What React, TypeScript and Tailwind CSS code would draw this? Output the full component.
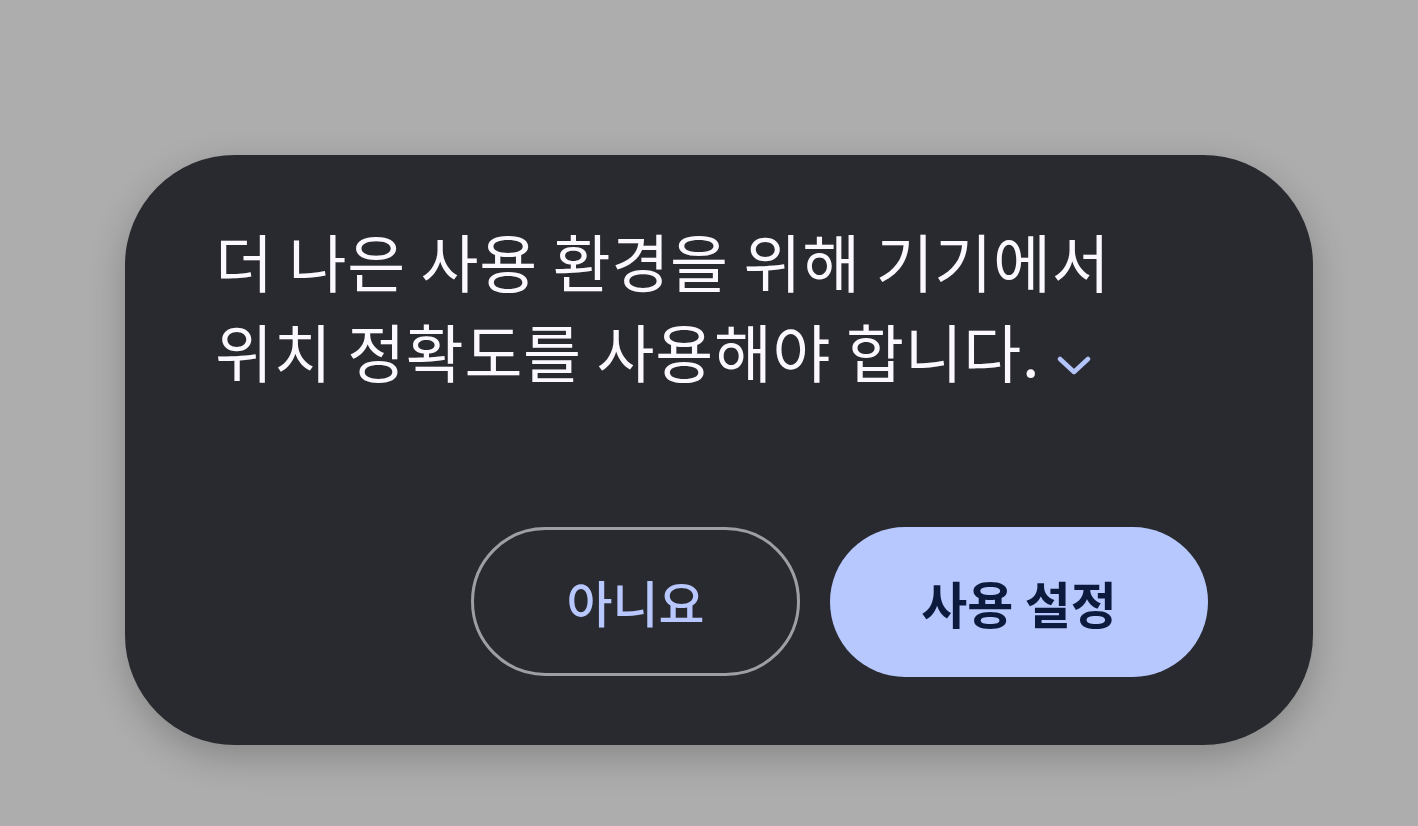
import React from "react";

export default function App() {
  return (
    <div
      className="w-[1418px] h-[826px] bg-[#adadad] pt-[155px] pl-[125px] overflow-hidden"
      style={{ fontFamily: '"Noto Sans CJK KR", "Noto Sans", sans-serif' }}
    >
      <div className="w-[1188px] h-[590px] rounded-[110px] bg-[#292a2f] shadow-[0_12px_36px_rgba(0,0,0,0.22)] pl-[90px] pr-[60px] pt-[60px] pb-[68px] flex flex-col">
        <p className="text-[63px] leading-[90px] text-[#fcf8ff] font-normal tracking-[0.7px] whitespace-nowrap">
          더 나은 사용 환경을 위해 기기에서
          <br />
          위치 정확도를 사용해야 합니다.
          <svg
            className="inline-block ml-[17px] align-[2px]"
            width="34"
            height="20"
            viewBox="0 0 34 20"
          >
            <polyline
              points="3,4 17,17 31,4"
              fill="none"
              stroke="#b4c5fc"
              strokeWidth="4.5"
              strokeLinecap="round"
              strokeLinejoin="round"
            />
          </svg>
        </p>
        <div className="mt-auto flex justify-end gap-[30px] pr-[45px]">
          <button className="w-[329px] h-[149px] rounded-full border-[3px] border-[#9f9fa3] text-[#b8c8ff] text-[50px] font-medium flex items-center justify-center">
            아니요
          </button>
          <button className="w-[378px] h-[150px] rounded-full bg-[#b6c8fe] text-[#0c1a3d] text-[50px] font-semibold flex items-center justify-center">
            사용 설정
          </button>
        </div>
      </div>
    </div>
  );
}
